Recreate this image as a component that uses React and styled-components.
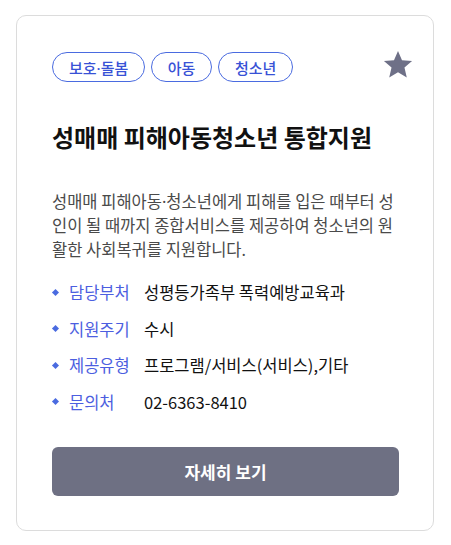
import React from "react";
import styled, { createGlobalStyle } from "styled-components";

const Global = createGlobalStyle`
  html, body { margin: 0; padding: 0; background: #fff; }
  body { font-family: "Noto Sans CJK KR", "Noto Sans", sans-serif; }
  * { box-sizing: border-box; }
`;

const Page = styled.div`
  padding: 15px 16px;
`;

const Card = styled.div`
  width: 418px;
  border: 1px solid #dcdcdc;
  border-radius: 10px;
  padding: 36px 34px 34px 35px;
  display: flex;
  flex-direction: column;
`;

const Header = styled.div`
  display: flex;
  align-items: flex-start;
  justify-content: space-between;
`;

const Tags = styled.div`
  display: flex;
  gap: 5.5px;
`;

const Tag = styled.span`
  height: 30px;
  display: inline-flex;
  align-items: center;
  padding: 0 16px;
  border: 1px solid #4a6be0;
  border-radius: 15px;
  color: #3852d6;
  font-family: "Noto Sans", "Noto Sans CJK KR", sans-serif;
  font-size: 15px;
  font-weight: 500;
`;

const StarButton = styled.button`
  border: 0;
  background: none;
  padding: 0;
  margin: -4px -15px 0 0;
  width: 32px;
  height: 32px;
  display: flex;
  align-items: center;
  justify-content: center;
  cursor: pointer;
`;

const Title = styled.h2`
  margin: 38px 0 0;
  font-size: 24px;
  font-weight: 700;
  line-height: 34px;
  color: #111;
`;

const Desc = styled.p`
  margin: 36px 0 0;
  font-family: "Noto Sans", "Noto Sans CJK KR", sans-serif;
  font-size: 16.5px;
  line-height: 24px;
  word-spacing: -0.6px;
  color: #4a4a4a;
`;

const InfoList = styled.ul`
  list-style: none;
  margin: 18px 0 0;
  padding: 0;
  display: flex;
  flex-direction: column;
  gap: 12.5px;
`;

const InfoRow = styled.li`
  display: flex;
  align-items: center;
  font-size: 16.5px;
  line-height: 24px;
`;

const Bullet = styled.span`
  width: 5px;
  height: 5px;
  background: #4a6be0;
  transform: rotate(45deg);
  margin: 0 11px 0 1px;
  flex: none;
`;

const Label = styled.span`
  width: 75px;
  flex: none;
  color: #4c5ee0;
`;

const Value = styled.span`
  color: #111;
`;

const DetailButton = styled.button`
  margin-top: 33px;
  height: 49px;
  border: 0;
  border-radius: 6px;
  background: #6e7083;
  color: #fff;
  font-family: inherit;
  font-size: 17px;
  font-weight: 700;
  cursor: pointer;
`;

const StarIcon = () => (
  <svg width="32" height="31" viewBox="0 0 24 24" fill="#6e7087">
    <path d="M12 1.5l3.1 7.2 7.8.6-5.9 5.1 1.8 7.6L12 18l-6.8 4 1.8-7.6-5.9-5.1 7.8-.6z" />
  </svg>
);

const info = [
  ["담당부처", "성평등가족부 폭력예방교육과"],
  ["지원주기", "수시"],
  ["제공유형", "프로그램/서비스(서비스),기타"],
  ["문의처", "02-6363-8410"],
];

export default function App() {
  return (
    <>
      <Global />
      <Page>
        <Card>
          <Header>
            <Tags>
              <Tag>보호·돌봄</Tag>
              <Tag>아동</Tag>
              <Tag>청소년</Tag>
            </Tags>
            <StarButton aria-label="즐겨찾기">
              <StarIcon />
            </StarButton>
          </Header>
          <Title>성매매 피해아동청소년 통합지원</Title>
          <Desc>
            성매매 피해아동·청소년에게 피해를 입은 때부터 성인이 될 때까지 종합서비스를 제공하여 청소년의 원활한 사회복귀를 지원합니다.
          </Desc>
          <InfoList>
            {info.map(([k, v]) => (
              <InfoRow key={k}>
                <Bullet />
                <Label>{k}</Label>
                <Value>{v}</Value>
              </InfoRow>
            ))}
          </InfoList>
          <DetailButton>자세히 보기</DetailButton>
        </Card>
      </Page>
    </>
  );
}
